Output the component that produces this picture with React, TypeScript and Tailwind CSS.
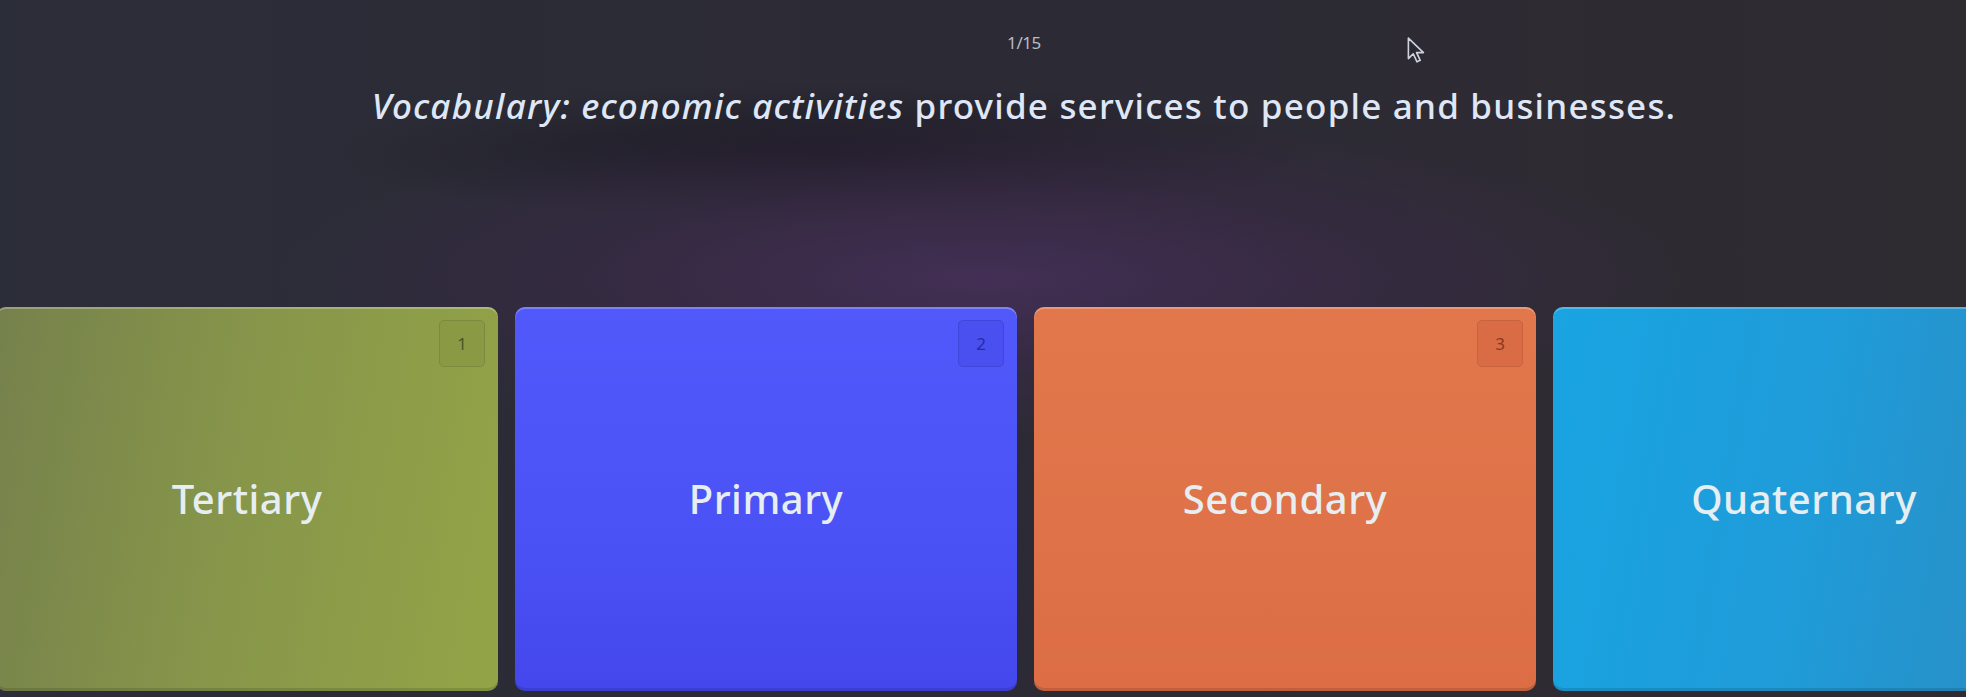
import React from 'react';

type Option = {
    id: number;
    label: string;
    card: string;
    badge: string;
};

const options: Option[] = [
    {
        id: 1,
        label: 'Tertiary',
        card: 'bg-[linear-gradient(100deg,#75814c_0%,#86954a_45%,#93a447_100%)]',
        badge: 'bg-[#8a9a44] border-[#7b8a3e] text-[#4a5527]',
    },
    {
        id: 2,
        label: 'Primary',
        card: 'bg-[linear-gradient(180deg,#5259fb_0%,#4a52f6_60%,#4447ec_100%)]',
        badge: 'bg-[#4a50ef] border-[#3f46da] text-[#262ba0]',
    },
    {
        id: 3,
        label: 'Secondary',
        card: 'bg-[linear-gradient(180deg,#e2774c_0%,#df7248_60%,#dc6d45_100%)]',
        badge: 'bg-[#d96c45] border-[#c9623e] text-[#8a391d]',
    },
    {
        id: 4,
        label: 'Quaternary',
        card: 'bg-[linear-gradient(100deg,#19a4e2_0%,#1f9cd9_50%,#2b8cc2_100%)]',
        badge: 'bg-[#1b98d4] border-[#188bc4] text-[#0d5b85]',
    },
];

const Cursor: React.FC = () => (
    <svg width="22" height="28" viewBox="0 0 20 26" className="absolute left-[1406px] top-[36px]">
        <path d="M2 2 L2 21 L6.5 16.5 L10 24 L13 22.6 L9.6 15.4 L16 15.4 Z" fill="#2a2833" stroke="#cfd3de" strokeWidth="1.5" strokeLinejoin="round" />
    </svg>
);

const App: React.FC = () => {
    return (
        <div className="relative w-[1966px] h-[697px] overflow-hidden bg-[radial-gradient(ellipse_36%_24%_at_50%_40%,#432f55_0%,rgba(60,42,74,0.6)_50%,rgba(43,41,52,0)_100%),radial-gradient(ellipse_25%_10%_at_42%_22%,#1d1b25_0%,rgba(29,27,37,0)_100%),linear-gradient(90deg,#2b2d38_0%,#2c2a35_50%,#2e2b31_100%)] font-['Noto_Sans',sans-serif]">
            <Cursor />

            <div className="flex flex-col items-center pt-[32px] pl-[82px]">
                <div className="text-[17px] leading-[22px] text-[#b9bcc6] tracking-tight">1/15</div>
                <div className="mt-[29px] text-[35px] leading-[46px] text-[#dfe7f6] font-medium tracking-[1.2px]">
                    <span className="italic">Vocabulary: economic activities</span> provide services to people and businesses.
                </div>
            </div>

            <div className="flex gap-[17px] -ml-[4px] mt-[178px]">
                {options.map(opt => (
                    <div
                        key={opt.id}
                        className={`relative shrink-0 w-[502px] h-[384px] rounded-[10px] flex items-center justify-center shadow-[inset_0_2px_0_rgba(255,255,255,0.25),inset_0_-3px_0_rgba(0,0,0,0.12)] ${opt.card}`}
                    >
                        {opt.id < 4 && (
                            <div className={`absolute top-[13px] right-[13px] w-[46px] h-[47px] rounded-[5px] border flex items-center justify-center text-[17px] ${opt.badge}`}>
                                {opt.id}
                            </div>
                        )}
                        <span className="text-[40px] font-medium text-[#e7eef2] tracking-[0.5px]">{opt.label}</span>
                    </div>
                ))}
            </div>
        </div>
    );
};

export default App;
